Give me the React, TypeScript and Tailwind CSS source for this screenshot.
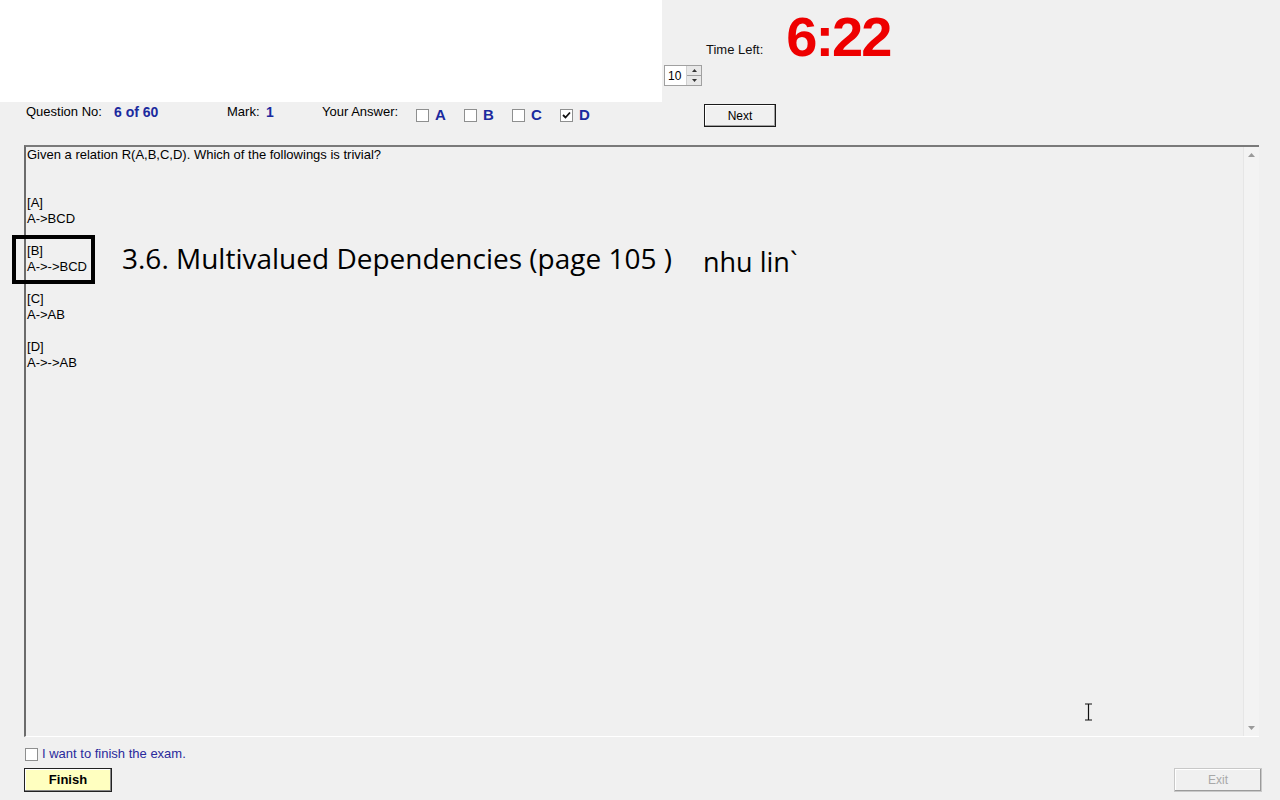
import React from "react";

const options = [
  { key: "A", text: "A->BCD" },
  { key: "B", text: "A->->BCD" },
  { key: "C", text: "A->AB" },
  { key: "D", text: "A->->AB" },
];

function Check({ checked }: { checked?: boolean }) {
  return (
    <span className="w-[13px] h-[13px] border border-[#8e8f8f] bg-white flex items-center justify-center shrink-0">
      {checked && (
        <svg width="9" height="9" viewBox="0 0 9 9">
          <path d="M1 4 L3.5 6.5 L8 1.5" stroke="#111" strokeWidth="1.8" fill="none" />
        </svg>
      )}
    </span>
  );
}

export default function App() {
  return (
    <div
      className="w-[1280px] h-[800px] bg-[#f0f0f0] text-[13px] text-black flex flex-col relative overflow-hidden"
      style={{ fontFamily: '"Liberation Sans", Arial, sans-serif' }}
    >
      {/* header */}
      <div className="h-[102px] flex items-start shrink-0">
        <div className="w-[662px] h-full bg-white" />
        <div className="ml-[2px] mt-[65px] w-[38px] h-[21px] bg-white border border-[#a0a0a0] flex items-center">
          <span className="pl-[3px] text-[12px] leading-none flex-1">10</span>
          <div className="w-[15px] h-full flex flex-col border-l border-[#d0d0d0]">
            <div className="flex-1 bg-[#e8e8e8] border-b border-[#a0a0a0] flex items-center justify-center">
              <svg width="5" height="3" viewBox="0 0 5 3"><path d="M0 3 L2.5 0 L5 3Z" fill="#333" /></svg>
            </div>
            <div className="flex-1 bg-[#e8e8e8] flex items-center justify-center">
              <svg width="5" height="3" viewBox="0 0 5 3"><path d="M0 0 L2.5 3 L5 0Z" fill="#333" /></svg>
            </div>
          </div>
        </div>
        <span className="ml-[4px] mt-[40px] text-[13px] text-[#111]">Time Left:</span>
        <span className="ml-[23px] mt-[2px] text-[56px] leading-[70px] font-bold text-[#ee0000] tracking-[-2px]">
          6:22
        </span>
      </div>

      {/* question row */}
      <div className="h-[43px] flex items-start shrink-0">
        <div className="flex items-center mt-[2px] h-[16px]">
          <span className="ml-[26px] w-[88px]">Question No:</span>
          <span className="w-[113px] font-bold text-[14px] text-[#1b2a9e]">6 of 60</span>
          <span className="w-[39px]">Mark:</span>
          <span className="w-[56px] font-bold text-[14px] text-[#1b2a9e]">1</span>
          <span className="w-[94px]">Your Answer:</span>
          {options.map((o) => (
            <span key={o.key} className="flex items-center w-[48px] mt-[6px]">
              <Check checked={o.key === "D"} />
              <span className="ml-[6px] font-bold text-[15px] text-[#1b2a9e]">{o.key}</span>
            </span>
          ))}
        </div>
        <button className="mt-[2px] w-[72px] h-[23px] bg-[#f0f0f0] border border-[#1a1a1a] shadow-[inset_-1px_-1px_0_#a0a0a0,inset_1px_1px_0_#ffffff] text-[12px] ml-[96px]">
          Next
        </button>
      </div>

      {/* question box */}
      <div className="ml-[24px] w-[1235px] h-[592px] border-t-2 border-l-2 border-t-[#7a7a7a] border-l-[#6c6c6c] border-b border-b-white flex shrink-0">
        <div className="flex-1 pl-[1px] leading-[16px]">
          <div>Given a relation R(A,B,C,D). Which of the followings is trivial?</div>
          <div className="h-[32px]" />
          {options.map((o) => (
            <div key={o.key} className="mb-[16px]">
              <div>[{o.key}]</div>
              <div>{o.text}</div>
            </div>
          ))}
        </div>
        <div className="w-[16px] h-full bg-[#f3f3f3] border-l border-[#e6e6e6] flex flex-col items-center justify-between py-[6px]">
          <svg width="7" height="4" viewBox="0 0 7 4"><path d="M0 4 L3.5 0 L7 4Z" fill="#9a9a9a" /></svg>
          <svg width="7" height="4" viewBox="0 0 7 4"><path d="M0 0 L3.5 4 L7 0Z" fill="#9a9a9a" /></svg>
        </div>
      </div>

      {/* footer */}
      <div className="flex items-center mt-[10px] ml-[25px] h-[14px]">
        <Check />
        <span className="ml-[4px] text-[#2a2a9c]">I want to finish the exam.</span>
      </div>
      <div className="flex items-center mt-[7px] ml-[24px] mr-[18px] justify-between">
        <button className="w-[88px] h-[24px] bg-[#ffffc0] border border-[#222] shadow-[inset_-1px_-1px_0_#888,inset_1px_1px_0_#fff] font-bold text-[13px]">
          Finish
        </button>
        <button className="w-[88px] h-[24px] bg-[#f0f0f0] border border-[#c8c8c8] shadow-[inset_-1px_-1px_0_#9a9a9a,inset_1px_1px_0_#fff] text-[12px] text-[#a8a8a8]">
          Exit
        </button>
      </div>

      {/* annotations over the screenshot */}
      <div className="absolute left-[12px] top-[235px] w-[83px] h-[49px] border-4 border-black" />
      <div
        className="absolute left-[122px] top-[240px] text-[28px] leading-[36px] text-black"
        style={{ fontFamily: '"Open Sans", "Noto Sans", sans-serif' }}
      >
        3.6. Multivalued Dependencies (page 105 )
      </div>
      <div
        className="absolute left-[703px] top-[245px] text-[27px] leading-[34px] text-black"
        style={{ fontFamily: '"Open Sans", "Noto Sans", sans-serif' }}
      >
        nhu lin`
      </div>
      <svg className="absolute left-[1083px] top-[703px]" width="11" height="18" viewBox="0 0 11 18">
        <path d="M2 1 H5.5 M5.5 1 H9 M5.5 1 V17 M2 17 H9" stroke="#111" strokeWidth="1.2" fill="none" />
      </svg>
    </div>
  );
}
